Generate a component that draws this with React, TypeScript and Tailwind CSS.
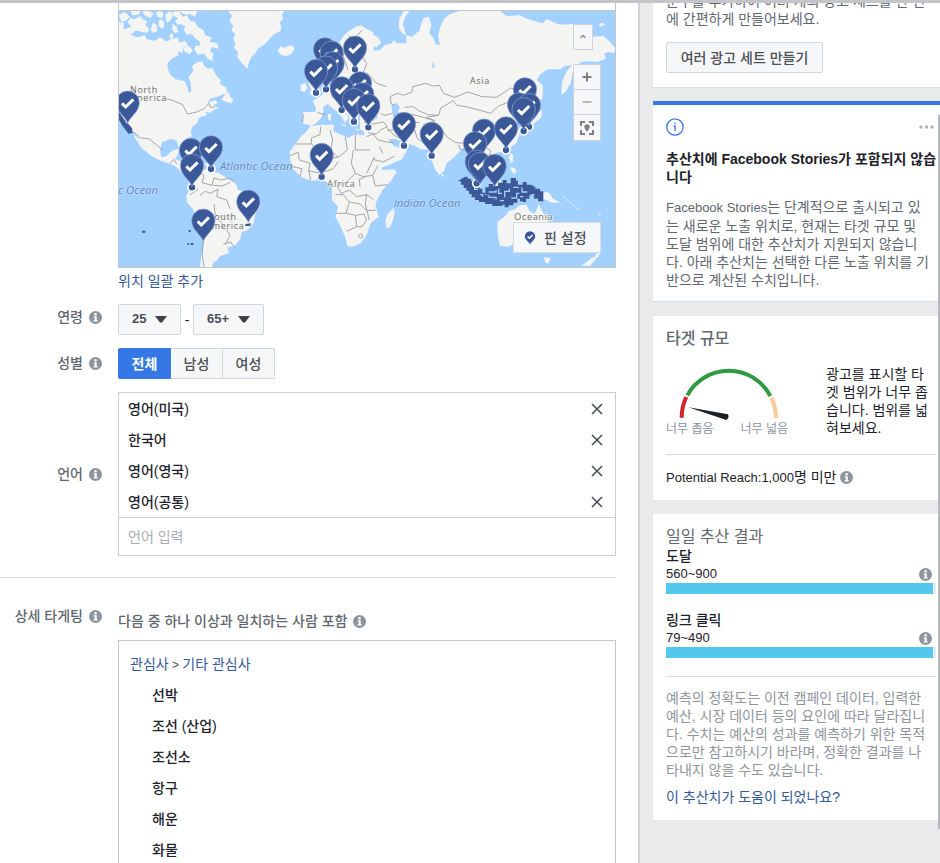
import React, { useState } from "react";
import clsx from "clsx";

const locationPins = [
  { x: 975, y: 148 }, { x: 995, y: 158 }, { x: 1065, y: 143, dot: true },
  { x: 998, y: 190 }, { x: 978, y: 203, dot: true }, { x: 948, y: 213, dot: true },
  { x: 1080, y: 250 }, { x: 1025, y: 265, dot: true }, { x: 1087, y: 283 },
  { x: 1062, y: 300, dot: true }, { x: 1105, y: 317, dot: true }, { x: 383, y: 308 },
  { x: 573, y: 450 }, { x: 633, y: 442, dot: true }, { x: 576, y: 497, dot: true },
  { x: 745, y: 605 }, { x: 610, y: 662 }, { x: 965, y: 465, dot: true },
  { x: 1212, y: 372, dot: true }, { x: 1295, y: 402, dot: true }, { x: 1575, y: 268 },
  { x: 1557, y: 313 }, { x: 1587, y: 315, dot: true }, { x: 1571, y: 328, dot: true },
  { x: 1452, y: 392 }, { x: 1518, y: 385, dot: true }, { x: 1425, y: 430 },
  { x: 1430, y: 485, dot: true }, { x: 1440, y: 492 }, { x: 1484, y: 498 },
];

const languages = ["영어(미국)", "한국어", "영어(영국)", "영어(공통)"];
const interests = ["선박", "조선 (산업)", "조선소", "항구", "해운", "화물"];
const genders = ["전체", "남성", "여성"];

const results = [
  { label: "도달", value: "560~900", percent: 99 },
  { label: "링크 클릭", value: "79~490", percent: 99 },
];

const InfoIcon: React.FC = () => (
  <svg viewBox="0 0 13 13" className="h-[13px] w-[13px] shrink-0" aria-hidden="true">
    <circle cx="6.5" cy="6.5" r="6.5" fill="#8d949e" />
    <circle cx="6.6" cy="3.3" r="1.2" fill="#fff" />
    <path d="M4.8 5.2h2.9v4h1v1.2H4.6V9.2h1V6.4h-.8z" fill="#fff" />
  </svg>
);

const Pin: React.FC<{ x: number; y: number; dot?: boolean }> = ({ x, y, dot }) => (
  <g transform={`translate(${x} ${y})`}>
    {dot && <circle cx="0" cy="65" r="12" fill="#3b5998" stroke="#fff" strokeWidth="5" />}
    <path d="M0 62C-6 42-35 28-35 0a35 35 0 0 1 70 0C35 28 6 42 0 62Z" fill="#3b5998" stroke="#8fa6d6" strokeWidth="2" />
    <path d="M-17 2 -6 13 17-10" fill="none" stroke="#fff" strokeWidth="9" />
  </g>
);

const WorldMap: React.FC = () => (
  <svg viewBox="357 33 1488 768" preserveAspectRatio="xMidYMid slice" className="block h-64 w-full bg-[#a3d1ff]" role="img" aria-label="World map">
    <g fill="#f4f4f2">
      {/* North America */}
      <g transform="translate(330 0)">
        <path d="M27 66 42 70 40 88 58 84 72 98 60 104 84 112 104 106 110 118 134 122 150 112 168 124 182 120 178 104 190 100 188 118 204 112 208 128 224 122 234 134 222 140 216 158 204 154 206 166 188 174 172 190 174 210 182 226 198 238 224 244 232 262 236 278 244 274 242 248 236 232 250 212 246 198 262 186 278 184 282 198 296 206 308 204 318 226 332 240 330 252 348 262 352 278 336 284 318 292 300 296 292 310 316 300 322 308 308 318 326 322 300 338 286 336 290 346 268 352 262 368 246 382 242 396 246 408 228 418 214 434 220 462 208 452 200 422 184 416 168 422 156 426 150 450 154 472 170 468 186 452 206 446 204 464 194 476 212 484 226 494 228 512 240 524 236 532 216 518 198 500 182 492 152 482 124 468 100 448 88 418 76 400 62 398 46 366 27 338Z" />
        <path d="M74 404 88 420 100 436 106 452 94 444 82 424 72 410ZM334 300 344 284 356 276 362 292 370 300 364 310 350 306Z" />
        <path d="M27 44 44 36 60 50 48 62 34 66ZM52 66 62 54 72 58 92 48 98 58 112 64 106 76 118 86 112 98 96 96 82 92 66 96 54 84 64 80ZM62 33 92 33 86 44 66 46ZM96 34 116 33 130 40 122 54 106 48ZM138 40 148 33 160 38 158 54 144 52ZM146 62 156 58 164 72 158 86 146 80ZM166 44 180 33 190 46 184 58 172 70 168 58ZM128 68 140 74 142 92 130 100 122 90Z" />
        <path d="M186 36 206 33 218 50 232 46 240 62 256 66 262 80 280 90 286 106 304 112 300 126 322 130 326 146 306 142 300 154 312 162 306 174 312 184 294 178 282 160 264 164 252 148 256 138 272 136 268 124 252 112 246 102 230 104 222 90 226 80 212 72 202 74 196 62 204 54 192 48ZM228 136 240 140 248 152 240 162 226 156 220 148ZM206 33 262 33 254 50 240 42 226 44ZM188 72 200 80 204 96 196 100 186 88Z" />
        {/* Greenland and Iceland */}
        <path d="M355 33 366 48 358 62 370 78 364 92 376 102 370 116 376 132 372 144 384 156 382 172 396 190 406 200 412 207 416 190 424 172 436 160 442 148 462 134 476 120 490 104 512 92 514 78 508 68 520 56 516 44 522 33Z" />
        <path d="M503 150 514 138 522 144 534 138 546 136 554 148 546 160 532 168 516 166 508 160ZM232 472 250 470 276 482 270 488 250 480ZM284 490 304 490 304 498 288 498Z" />
        {/* Europe */}
        <path d="M694 150 688 128 700 108 718 92 738 80 752 76 768 86 790 96 800 420 748 344 738 366 728 372 716 350 702 330 696 316 688 324 710 344 716 356 704 368 696 352 678 332 664 322 654 312 640 320 640 334 632 356 618 370 604 378 594 374 580 372 578 352 580 336 608 336 618 334 616 320 608 302 622 294 640 282 656 270 676 268 692 248 684 222 694 206 690 178Z" />
        <path d="M572 256 586 248 592 264 584 276 572 272ZM594 250 606 232 614 252 626 268 624 280 598 284 604 268ZM654 342 664 342 662 362 654 358ZM692 372 708 374 704 380ZM734 386 750 388 742 392Z" />
      </g>
      {/* South America */}
      <path transform="translate(330 420)" d="M238 112 252 96 274 88 302 92 328 100 344 110 366 124 378 132 384 150 410 156 434 166 450 180 450 200 436 222 430 250 414 270 396 276 390 298 374 318 352 322 356 340 330 348 322 360 310 368 306 382 270 382 274 350 280 324 283 296 280 258 262 238 248 206 232 188 228 168 240 150 236 128Z" />
      {/* Africa and Madagascar */}
      <path d="M932 378 970 374 1002 374 1000 394 1024 404 1046 414 1064 402 1092 406 1106 420 1116 446 1132 482 1148 510 1182 508 1190 516 1172 544 1148 570 1130 602 1126 616 1136 650 1112 670 1100 704 1082 730 1058 740 1042 738 1036 712 1020 676 1006 650 1014 620 996 600 996 560 972 540 934 542 904 532 876 504 870 480 870 454 886 432 904 408 920 394Z" />
      <path d="M1182 624 1184 642 1178 662 1170 682 1160 684 1156 662 1164 640Z" />
      {/* Asia */}
      <g transform="translate(1080 0)">
        <path d="M0 90 26 96 54 112 64 128 50 142 30 136 38 152 60 150 74 136 96 130 100 120 112 130 140 130 138 106 156 110 178 92 190 54 206 50 214 74 208 100 220 114 226 132 240 136 234 108 240 84 252 56 270 42 300 33 420 33 440 48 480 46 500 56 548 70 560 58 600 74 640 72 700 110 730 108 748 124 766 144 762 158 744 156 732 162 738 176 712 186 692 184 664 186 644 200 638 218 632 250 616 276 604 284 606 246 620 214 636 196 614 198 600 208 562 208 540 224 530 240 548 256 548 290 530 308 506 322 510 352 500 360 484 322 456 320 452 336 466 350 470 372 480 400 468 430 440 452 410 458 392 466 398 488 412 508 406 530 388 540 370 512 352 488 348 450 330 430 306 448 282 472 260 490 254 510 238 526 226 510 214 478 206 450 184 448 160 436 136 430 104 416 84 418 102 438 130 446 140 452 126 478 88 494 56 506 44 486 28 448 14 420 12 394 0 388Z" />
        <path d="M118 56 116 82 126 100 138 106 134 90 128 72 136 50 148 33 132 33ZM716 72 728 68 736 74 722 80ZM534 338 546 330 544 352 530 364 510 380 500 384 512 362 528 354ZM538 266 546 280 546 300 538 296ZM450 460 460 466 458 488 448 478ZM246 520 252 526 250 532 244 526ZM452 500 466 506 470 520 456 516Z" />
      </g>
      {/* Oceania */}
      <g transform="translate(1080 420)">
        <path d="M412 246 436 228 446 214 464 208 480 196 500 194 508 212 524 222 536 192 548 216 562 240 584 270 590 300 576 332 548 338 520 322 470 306 446 320 420 318 414 290ZM552 352 572 354 564 372 556 366ZM712 338 722 330 716 350 700 356ZM698 352 712 352 690 378 664 378Z" />
        <path d="M524 148 546 158 564 156 580 176 600 188 576 188 554 178 534 186ZM386 138 410 118 424 122 420 144 406 158 390 154Z" />
      </g>
    </g>
    {/* Inland water */}
    <path d="M1174 318 1188 308 1200 322 1194 334 1206 350 1196 364 1180 352ZM1092 346 1112 338 1134 350 1120 362 1096 360ZM1300 182 1304 206 1296 200ZM612 352 626 346 634 358 620 364Z" fill="#a3d1ff" />
    {/* Country borders */}
    <g fill="none" stroke="#a5a5ab" strokeWidth="3" strokeLinejoin="round">
      <path d="M490 294 520 302 548 314 562 342 590 336 612 326 626 310 632 322 644 322M390 396 404 398 422 414 446 416 466 432 488 450M510 490 522 478 530 492" />
      <path d="M592 514 612 526 606 548 636 556 642 534 664 540 690 534 700 546M600 586 616 574 630 580 654 568 650 590 680 600 690 626M640 556 666 558 690 548M570 584 594 568M642 612 646 650 672 676 690 706 676 734M654 650 690 644 694 664M670 732 692 726 704 744M612 700 606 760 612 800" />
      <path d="M886 432 934 432 934 414 960 404 962 380M934 432 990 474 1014 472 1042 450 1036 410M990 390 998 420 992 450 1014 472M1066 402 1066 450 1110 450M1060 450 1054 490 1066 520 1040 546 1010 556M870 468 894 456 898 480 930 490 926 512 960 520 1000 506 1014 486M900 530 906 506 876 500M926 512 932 540M952 540 956 516M1066 520 1090 530 1118 526 1134 496M1010 556 1024 580 1048 570 1070 590 1100 584 1120 598M1006 584 1030 584 1048 606 1038 640 1008 640M1048 606 1080 612 1100 632 1128 630M1100 584 1096 612 1108 660M1040 640 1066 646 1070 680 1040 694M1066 646 1092 642 1100 660 1086 680 1070 680M1080 560 1078 538 1098 528M1118 526 1126 558 1162 554M1100 520 1124 470M1076 708a6 6 0 1 0 12 0a6 6 0 1 0-12 0" />
      <path d="M910 344 908 366M952 338 978 344M1000 260 996 290 1016 302M1086 90 1060 120 1044 106M1036 142 1030 170 1044 210M1086 170 1100 190 1090 220 1110 250M1100 218 1130 250 1160 260M1092 366 1120 372 1150 366 1162 380 1142 390 1128 402 1104 398M1160 382 1180 404 1200 416M1162 392 1190 386 1220 396 1244 390 1252 416 1276 432M1100 410 1120 402 1134 420 1160 426 1182 428M1178 340 1154 346 1142 340M1118 478 1150 486 1184 468M1216 346 1230 366 1258 368M1138 440 1148 460" />
      <path d="M1174 312 1170 290 1192 280 1210 286 1236 276 1238 260 1276 250 1298 258 1318 256 1330 280 1364 292 1404 276 1446 290 1490 292 1532 264 1556 272M1174 312 1184 316M1214 322 1240 320 1256 332 1284 344 1316 346 1322 324 1360 302 1370 316 1398 320 1444 332 1472 340 1496 318 1526 306M1230 342 1256 348 1282 356 1304 362 1280 352 1316 346M1270 374 1300 364 1320 380 1342 412 1368 428 1404 430 1428 448 1428 470M1400 430 1404 450 1380 448 1376 434M1262 398 1290 382 1320 380M1452 440 1472 452 1466 480" />
      <path d="M1617 572 1617 606" strokeDasharray="6 3" />
    </g>
    {/* Selected area: Indonesia and small islands */}
    <g fill="#3b5998">
      <path d="M1395 530h8v6h10v6h8v8h10v6h8v10h8v12h8v8h10v8h14v4h16v-4h12v6h14v6h10v8h-24v4h-30v-6h-22v-6h-18v-6h-12v-8h-10v-10h-8v-10h-8v-8h-8v-10h-8v-10h-10z" />
      <path d="M1456 562h10v-10h14v6h14v-10h14v-8h12v10h12v-16h14v8h8v12h14v-8h12v8h14v6h12v6h14v8h10v30h-16v-8h-12v-10h-14v10h-10v8h-18v-8h-8v12h-12v8h-14v6h-12v-10h-10v-8h-14v-6h-12v-8h-10v-6h-12z" />
      <path d="M1540 534h8v8h-8zM1586 556h14v8h-14zM1568 600h10v6h-10zM1396 548h6v6h-6zM1412 570h6v8h-6z" />
      <path d="M357 336 374 360 396 384 398 398 386 402 368 378 357 360ZM426 692h10v6h-10ZM566 690h6v6h-6ZM562 730h5v5h-5ZM572 729h8v6h-8ZM736 672 754 670 750 678 736 678Z" />
    </g>
    <g stroke="#a3d1ff" strokeWidth="4" fill="none">
      <path d="M1466 576h22v-6M1496 566v14h10M1514 592v-18h14v-8M1534 594h16v-14h8M1540 562h16M1566 562v14h16M1560 590h10M1592 584h12M1424 560v8h10M1440 584h8v6M1474 592h14v6M1500 602h12" />
    </g>
    <g stroke="#f4f4f2" strokeWidth="3" fill="none">
      <path d="M376 366 400 376 406 392M1532 506 1544 528M1526 470 1534 494M1690 590 1720 616 1736 628M1798 640 1802 650" strokeDasharray="8 5" />
    </g>
    <g className="font-['Open_Sans','Noto_Sans',sans-serif]" fill="#6d6d6d" stroke="#f4f4f2" strokeWidth="4" paintOrder="stroke" fontSize="27" letterSpacing="2">
      <text x="390" y="278">North</text>
      <text x="384" y="304">America</text>
      <text x="1410" y="252">Asia</text>
      <text x="982" y="562">Africa</text>
      <text x="626" y="661">South</text>
      <text x="616" y="687">America</text>
      <text x="1543" y="660">Oceania</text>
    </g>
    <g className="font-['Open_Sans','Noto_Sans',sans-serif] italic" fill="#5b86bd" stroke="#c4e1ff" strokeWidth="3" paintOrder="stroke" fontSize="34">
      <text x="660" y="509">Atlantic Ocean</text>
      <text x="474" y="581" textAnchor="end">Pacific Ocean</text>
      <text x="1181" y="621">Indian Ocean</text>
    </g>
    {locationPins.map(pin => <Pin key={`${pin.x}-${pin.y}`} {...pin} />)}
  </svg>
);

const MapControls: React.FC = () => (
  <>
    <button aria-label="Collapse map" className="absolute right-[22px] top-[13px] flex h-[26px] w-5 items-center justify-center border border-[#cfd3d9] bg-[#f6f7f9]">
      <svg viewBox="0 0 8 8" className="h-2 w-2"><path d="M1.5 5 4 2.5 6.500 5" fill="none" stroke="#8b8b8b" strokeWidth="1.300" /></svg>
    </button>
    <div className="absolute right-[14px] top-[53px] flex w-7 flex-col divide-y divide-[#cfd3d9] border border-[#cfd3d9] bg-[#f6f7f9]">
      <button aria-label="Zoom in" className="flex h-[25px] items-center justify-center">
        <svg viewBox="0 0 10 10" className="h-2.5 w-2.5"><path d="M5 .5v9M.5 5h9" stroke="#7f7f7f" strokeWidth="2" /></svg>
      </button>
      <button aria-label="Zoom out" className="flex h-[25px] items-center justify-center">
        <svg viewBox="0 0 10 10" className="h-2.5 w-2.5"><path d="M.5 5h9" stroke="#b9b9b9" strokeWidth="2" /></svg>
      </button>
      <button aria-label="Fit pins" className="flex h-[25px] items-center justify-center">
        <svg viewBox="0 0 14 14" className="h-3.5 w-3.5">
          <path d="M1 5V1h4M9 1h4v4M13 9v4H9M5 13H1V9" fill="none" stroke="#7f7f7f" strokeWidth="2" />
          <path d="M7 11C6.500 9 4.300 8.300 4.300 6a2.700 2.700 0 0 1 5.400 0C9.700 8.300 7.500 9 7 11Z" fill="#7f7f7f" />
        </svg>
      </button>
    </div>
    <button className="absolute bottom-[14px] right-[14px] flex h-[31px] w-[88px] items-center gap-2 border border-[#dadde1] bg-[#f6f7f9] pl-[10px] text-sm font-medium text-[#4b4f56]">
      <svg viewBox="0 0 12 14" className="h-3.5 w-3">
        <path d="M6 13.500C5 10.500.8 9 .8 5.400a5.200 5.200 0 0 1 10.400 0C11.200 9 7 10.500 6 13.500Z" fill="#3b5998" />
        <path d="M3.600 5.500 5.400 7.300 8.600 3.900" fill="none" stroke="#fff" strokeWidth="1.400" />
      </svg>
      핀 설정
    </button>
  </>
);

const FieldLabel: React.FC<{ htmlFor?: string; id?: string; children: React.ReactNode }> = ({ htmlFor, id, children }) => (
  <div className="flex w-[118px] shrink-0 items-center justify-end gap-1.5 pr-4 text-sm leading-5 font-medium text-[#616770]">
    <label id={id} htmlFor={htmlFor}>{children}</label>
    <InfoIcon />
  </div>
);

const AgeSelect: React.FC<{ id: string; label: string; value: string; options: string[]; className: string }> = ({ id, label, value, options, className }) => (
  <div className={clsx("relative", className)}>
    <select id={id} aria-label={label} defaultValue={value} className="h-[31px] w-full appearance-none rounded-[2px] border border-[#d3d6db] bg-[#f6f7f9] pl-[13px] text-[13px] font-bold text-[#4b4f56]">
      {options.map(o => <option key={o}>{o}</option>)}
    </select>
    <svg viewBox="0 0 12 7" className="pointer-events-none absolute right-[14px] top-3 h-[7px] w-3"><path d="M0 0h12L7 6.500H5Z" fill="#3f4349" /></svg>
  </div>
);

const Lines: React.FC<{ lines: React.ReactNode[]; className?: string }> = ({ lines, className }) => (
  <p className={clsx("text-sm leading-[18px] whitespace-nowrap", className)}>
    {lines.map((line, i) => <span key={i} className="block">{line}</span>)}
  </p>
);

const Gauge: React.FC = () => (
  <div className="w-[122px] shrink-0">
    <svg viewBox="78 135 366 165" className="block h-[55px] w-full" aria-hidden="true">
      <g fill="none" strokeWidth="12">
        <path d="M125 293A141 141 0 0 1 139 231" stroke="#d0252b" />
        <path d="M142 226A141 141 0 0 1 391 228" stroke="#2f9a41" />
        <path d="M394 233A141 141 0 0 1 408 294" stroke="#fccb97" />
      </g>
      <path d="M145 262 264 283Q269 294 259 300Z" fill="#1c1e21" />
    </svg>
    <div className="flex justify-between text-xs leading-[18px] text-[#8d949e]">
      <span>너무 좁음</span>
      <span>너무 넓음</span>
    </div>
  </div>
);

const App: React.FC = () => {
  const [gender, setGender] = useState("전체");
  const [selected, setSelected] = useState(languages);

  return (
    <div className="flex h-screen overflow-hidden border-t-[3px] border-[#c4c5c8] bg-white font-['Liberation_Sans','Noto_Sans_CJK_KR',sans-serif] text-sm text-[#1d2129]">
      {/* Audience form */}
      <main className="flex min-w-0 flex-1 flex-col pr-[22px]">
        <section className="pl-[118px]">
          <div className="border border-t-0 border-[#c3c6cc]">
            <div className="h-2 border-b border-[#c3c6cc]" />
            <div className="relative">
              <WorldMap />
              <MapControls />
            </div>
          </div>
          <a href="#bulk" className="mt-[3px] inline-block leading-5 text-[#365899]">위치 일괄 추가</a>
        </section>

        <section className="mt-[13px] flex items-start">
          <div className="pt-[3px]"><FieldLabel htmlFor="age-min">연령</FieldLabel></div>
          <div className="flex items-center">
            <AgeSelect id="age-min" label="최소 연령" value="25" options={["18", "25", "35"]} className="w-[63px]" />
            <span className="w-3 text-center">-</span>
            <AgeSelect id="age-max" label="최대 연령" value="65+" options={["45", "55", "65+"]} className="w-[71px]" />
          </div>
        </section>

        <section className="mt-[13px] flex items-start">
          <div className="pt-[5px]"><FieldLabel id="gender-label">성별</FieldLabel></div>
          <div role="group" aria-labelledby="gender-label" className="flex">
            {genders.map(g => (
              <button
                key={g}
                onClick={() => setGender(g)}
                className={clsx(
                  "h-[31px] w-[52px] border-y border-r text-sm first:w-[53px] first:rounded-l-[2px] first:border-l last:rounded-r-[2px]",
                  gender === g ? "border-[#3578e5] bg-[#3578e5] font-bold text-white" : "border-[#d3d6db] bg-[#f6f7f9] font-medium text-[#4b4f56]"
                )}
              >
                {g}
              </button>
            ))}
          </div>
        </section>

        <section className="mt-[13px] flex items-center border-b border-[#dadde1] pb-[21px]">
          <FieldLabel htmlFor="language">언어</FieldLabel>
          <div className="min-w-0 flex-1 border border-[#c9ccd1]">
            <ul>
              {selected.map(lang => (
                <li key={lang} className="flex h-[31px] items-center justify-between pl-[9px] pr-3 font-medium">
                  {lang}
                  <button aria-label={`${lang} 삭제`} onClick={() => setSelected(selected.filter(l => l !== lang))}>
                    <svg viewBox="0 0 12 12" className="h-3 w-3"><path d="M1 1 11 11M11 1 1 11" stroke="#4b4f56" strokeWidth="1.600" /></svg>
                  </button>
                </li>
              ))}
            </ul>
            <input id="language" placeholder="언어 입력" className="block h-[38px] w-full border-t border-[#c9ccd1] px-[9px] text-sm outline-none placeholder:text-[#a8adb5]" />
          </div>
        </section>

        <section className="flex min-h-0 flex-1 items-start pt-7">
          <FieldLabel id="detail-label">상세 타게팅</FieldLabel>
          <div className="flex min-w-0 flex-1 flex-col self-stretch pt-[5px]">
            <p className="flex items-center gap-1.5 leading-5 font-medium text-[#616770]">
              다음 중 하나 이상과 일치하는 사람 포함
              <InfoIcon />
            </p>
            <div className="mt-[9px] min-h-0 flex-1 border border-b-0 border-[#c3c6cc] pl-[11px] pt-2">
              <p className="h-[31px] leading-[31px] text-[#365899]">
                <a href="#interests">관심사</a>
                <span className="text-xs text-[#4b4f56]"> &gt; </span>
                <a href="#other">기타 관심사</a>
              </p>
              <ul aria-labelledby="detail-label" className="pl-[22px]">
                {interests.map(i => <li key={i} className="h-[31px] leading-[31px] font-medium">{i}</li>)}
              </ul>
            </div>
          </div>
        </section>
      </main>

      {/* Estimates */}
      <aside className="relative flex w-[302px] shrink-0 flex-col border-l-2 border-[#d2d4d8] bg-[#e9eaec] pl-[13px]">
        <section className="border-b border-[#dadde1] bg-white pb-[14px] pl-[13px]">
          <Lines className="-mt-[11px] text-[#616770]" lines={["문구를 추가하여 여러 개의 광고 세트를 한 번", "에 간편하게 만들어보세요."]} />
          <button className="mt-[14px] h-[31px] w-[157px] rounded-[2px] border border-[#d3d6db] bg-[#f6f7f9] font-medium text-[#4b4f56]">
            여러 광고 세트 만들기
          </button>
        </section>

        <section className="mt-[13px] border-b border-t-4 border-b-[#dadde1] border-t-[#3578e5] bg-white pt-[13px] pb-3 pl-[13px]">
          <div className="flex items-center justify-between pr-1.5">
            <svg viewBox="0 0 18 18" className="h-[18px] w-[18px]" aria-hidden="true">
              <circle cx="9" cy="9" r="8.200" fill="none" stroke="#3578e5" strokeWidth="1.300" />
              <path d="M9 4.800v1.500M7.800 8h1.300v5" fill="none" stroke="#3578e5" strokeWidth="1.300" />
            </svg>
            <button aria-label="더 보기">
              <svg viewBox="0 0 15 4" className="h-1 w-[15px]" fill="#b0b3b8"><circle cx="2" cy="2" r="1.700" /><circle cx="7.500" cy="2" r="1.700" /><circle cx="13" cy="2" r="1.700" /></svg>
            </button>
          </div>
          <Lines className="mt-[14px] font-bold" lines={["추산치에 Facebook Stories가 포함되지 않습", "니다"]} />
          <Lines
            className="mt-3 text-[#616770]"
            lines={[
              <><span className="text-[13px]">Facebook Stories</span>는 단계적으로 출시되고 있</>,
              "는 새로운 노출 위치로, 현재는 타겟 규모 및",
              "도달 범위에 대한 추산치가 지원되지 않습니",
              "다. 아래 추산치는 선택한 다른 노출 위치를 기",
              "반으로 계산된 수치입니다.",
            ]}
          />
        </section>

        <section className="mt-[14px] bg-white pb-3 pl-[13px] pr-1 pt-[13px]">
          <h2 className="text-base leading-5 font-medium text-[#616770]">타겟 규모</h2>
          <div className="mt-4 flex justify-between border-b border-[#dadde1] pb-4">
            <Gauge />
            <Lines className="w-[110px]" lines={["광고를 표시할 타", "겟 범위가 너무 좁", "습니다. 범위를 넓", "혀보세요."]} />
          </div>
          <p className="mt-3 flex items-center gap-1 leading-5">
            <span><span className="text-[13px]">Potential Reach:1,000</span>명 미만</span>
            <InfoIcon />
          </p>
        </section>

        <section className="mt-[14px] bg-white pb-[13px] pl-[13px] pr-1 pt-[13px]">
          <h2 className="text-base leading-5 text-[#616770]">일일 추산 결과</h2>
          <div className="space-y-[17px] border-b border-[#dadde1] pb-[18px]">
            {results.map(r => (
              <div key={r.label}>
                <h3 className="leading-[18px] font-medium">{r.label}</h3>
                <div className="flex items-center justify-between pr-1 text-[13px] leading-[18px]">
                  <span>{r.value}</span>
                  <InfoIcon />
                </div>
                <div className="h-[11px] bg-[#e9eaec]">
                  <div className="h-full bg-[#54c7ec]" style={{ width: `${r.percent}%` }} />
                </div>
              </div>
            ))}
          </div>
          <Lines
            className="mt-3 text-[#90949c]"
            lines={[
              "예측의 정확도는 이전 캠페인 데이터, 입력한",
              "예산, 시장 데이터 등의 요인에 따라 달라집니",
              "다. 수치는 예산의 성과를 예측하기 위한 목적",
              "으로만 참고하시기 바라며, 정확한 결과를 나",
              "타내지 않을 수도 있습니다.",
            ]}
          />
          <a href="#feedback" className="mt-2 inline-block leading-5 text-[#365899]">이 추산치가 도움이 되었나요?</a>
        </section>

        {/* Scroll thumb */}
        <div className="absolute right-0 top-[112px] h-[714px] w-0.5 bg-[#b8babd]" />
      </aside>
    </div>
  );
};

export default App;
